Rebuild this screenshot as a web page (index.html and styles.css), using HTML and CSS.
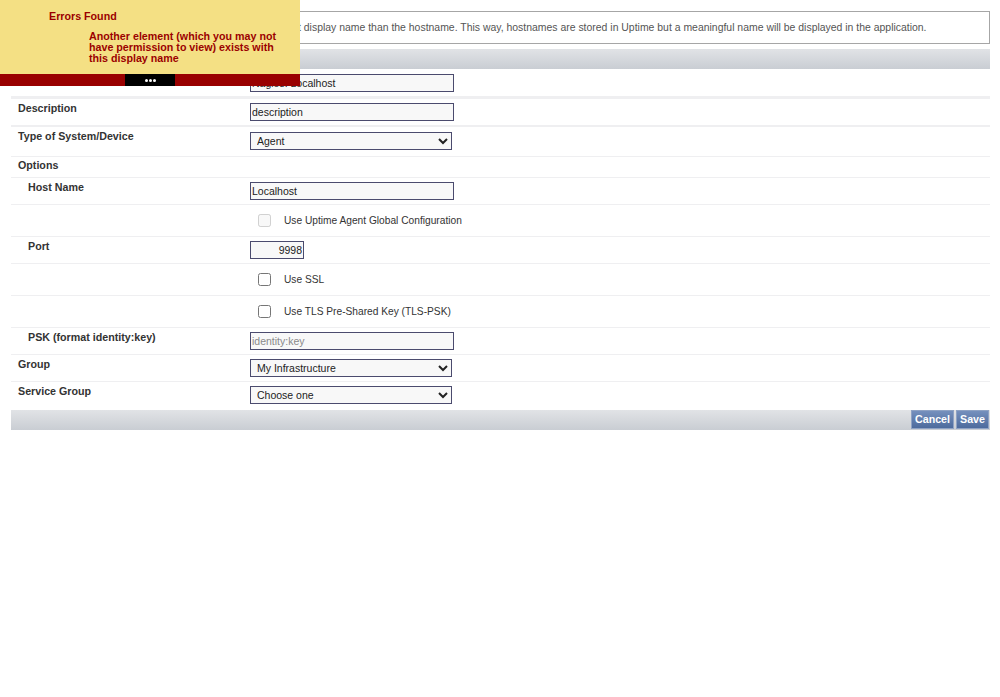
FILE: index.html
```html
<!DOCTYPE html>
<html>
<head>
<meta charset="utf-8">
<link rel="stylesheet" href="styles.css">
</head>
<body>
<div class="page">
  <div class="info">Use this field if you would like this system to use a different display name than the hostname. This way, hostnames are stored in Uptime but a meaningful name will be displayed in the application.</div>
  <div class="bar"></div>
  <div class="form">
    <div class="row r1">
      <div class="label">Display Name</div>
      <div class="field"><input class="text" type="text" value="Nagios: Localhost"></div>
    </div>
    <div class="row r2">
      <div class="label">Description</div>
      <div class="field"><input class="text" type="text" value="description"></div>
    </div>
    <div class="row r3">
      <div class="label">Type of System/Device</div>
      <div class="field"><select class="select"><option>Agent</option></select></div>
    </div>
    <div class="row short">
      <div class="label">Options</div>
      <div class="field"></div>
    </div>
    <div class="row">
      <div class="label indent">Host Name</div>
      <div class="field"><input class="text" type="text" value="Localhost"></div>
    </div>
    <div class="row check">
      <div class="label"></div>
      <div class="field"><label class="cb"><input type="checkbox" disabled><span class="cbtext">Use Uptime Agent Global Configuration</span></label></div>
    </div>
    <div class="row">
      <div class="label indent">Port</div>
      <div class="field"><input class="text port" type="text" value="9998"></div>
    </div>
    <div class="row check">
      <div class="label"></div>
      <div class="field"><label class="cb"><input type="checkbox"><span class="cbtext">Use SSL</span></label></div>
    </div>
    <div class="row check">
      <div class="label"></div>
      <div class="field"><label class="cb"><input type="checkbox"><span class="cbtext">Use TLS Pre-Shared Key (TLS-PSK)</span></label></div>
    </div>
    <div class="row">
      <div class="label indent">PSK (format identity:key)</div>
      <div class="field"><input class="text psk" type="text" placeholder="identity:key"></div>
    </div>
    <div class="row">
      <div class="label">Group</div>
      <div class="field"><select class="select"><option>My Infrastructure</option></select></div>
    </div>
    <div class="row last">
      <div class="label">Service Group</div>
      <div class="field"><select class="select"><option>Choose one</option></select></div>
    </div>
  </div>
  <div class="bar footer">
    <button class="btn">Cancel</button><button class="btn">Save</button>
  </div>
</div>

<div class="popup">
  <div class="popup-body">
    <div class="popup-title">Errors Found</div>
    <div class="popup-msg">Another element (which you may not have permission to view) exists with this display name</div>
  </div>
  <div class="popup-strip"><span class="popup-tab"><i class="dot"></i><i class="dot"></i><i class="dot"></i></span></div>
</div>
</body>
</html>
```
FILE: styles.css
```css
html, body {
  margin: 0;
  padding: 0;
  background: #fff;
}
body {
  font-family: "Liberation Sans", Arial, sans-serif;
  font-size: 10px;
  color: #333;
}
.page {
  padding: 11px 10px 0 11px;
}
.info {
  border: 1px solid #a6a6a6;
  box-sizing: border-box;
  height: 33px;
  padding: 0 0 0 17px;
  line-height: 31px;
  color: #555;
  font-size: 10.45px;
  white-space: nowrap;
  overflow: hidden;
}
.bar {
  margin-top: 5px;
  height: 20px;
  background: linear-gradient(#e1e3e6, #c9cdd3);
}
.form {
  display: flex;
  flex-direction: column;
}
.row {
  display: grid;
  grid-template-columns: 239px 1fr;
  border-bottom: 1px solid #efeff1;
  height: 26px;
}
.row.r1 {
  height: 27px;
  border-bottom: 3px solid #efeff1;
}
.row.r2 {
  border-bottom: 2px solid #efeff1;
}
.row.r3 {
  height: 29px;
}
.row.short {
  height: 20px;
}
.row.check {
  height: 31px;
}
.row.last {
  border-bottom: none;
  height: 28px;
}
.label {
  padding: 3px 0 0 7px;
  font-weight: bold;
  font-size: 10.7px;
  color: #333;
}
.row.short .label {
  padding-top: 2px;
}
.label.indent {
  padding-left: 17px;
}
.field {
  padding-top: 4px;
}
.r1 .field, .r3 .field {
  padding-top: 5px;
}
.text {
  box-sizing: border-box;
  width: 204px;
  height: 18px;
  border: 1px solid #4b4b6e;
  background: #f8f8f8;
  padding: 0 1px;
  margin: 0;
  font-family: "Liberation Sans", Arial, sans-serif;
  font-size: 10.5px;
  color: #222;
  border-radius: 0;
  outline: none;
  display: block;
}
.text.port {
  width: 54px;
  text-align: right;
}
.text.psk::placeholder {
  color: #8a8a8a;
}
.select {
  box-sizing: border-box;
  width: 202px;
  height: 18px;
  border: 1px solid #4b4b6e;
  border-radius: 0;
  background: #f8f8f8;
  margin: 0;
  padding: 0 0 0 2px;
  font-family: "Liberation Sans", Arial, sans-serif;
  font-size: 10.5px;
  color: #222;
  display: block;
}
.cb {
  display: flex;
  align-items: center;
  padding-top: 5px;
}
.cb input {
  width: 13px;
  height: 13px;
  margin: 0 0 0 8px;
}
.cbtext {
  margin-left: 13px;
  font-size: 10.2px;
  color: #333;
}
.footer {
  margin-top: 0;
  display: flex;
  justify-content: flex-end;
  align-items: flex-start;
  padding-right: 1px;
}
.btn {
  height: 19px;
  margin: 0 0 0 2px;
  padding: 0 3px;
  border: 1px solid #8ea2c4;
  background: linear-gradient(#7590bd, #4d6b9d);
  color: #fff;
  font-family: "Liberation Sans", Arial, sans-serif;
  font-weight: bold;
  font-size: 10.7px;
  border-radius: 0;
  line-height: 17px;
}
.popup {
  position: absolute;
  top: 0;
  left: 0;
  width: 300px;
}
.popup-body {
  background: #f4e084;
  height: 74px;
  box-sizing: border-box;
  padding: 10px 0 0 49px;
  color: #9b0000;
  font-weight: bold;
  font-size: 10.7px;
}
.popup-title {
  line-height: 13px;
}
.popup-msg {
  margin: 8px 0 0 40px;
  width: 200px;
  line-height: 11px;
}
.popup-strip {
  height: 12px;
  background: #990000;
  display: flex;
  justify-content: center;
}
.popup-tab {
  width: 50px;
  background: #000;
  display: flex;
  justify-content: center;
  align-items: center;
  gap: 1px;
}
.dot {
  width: 3px;
  height: 3px;
  border-radius: 50%;
  background: #fff;
}
```
